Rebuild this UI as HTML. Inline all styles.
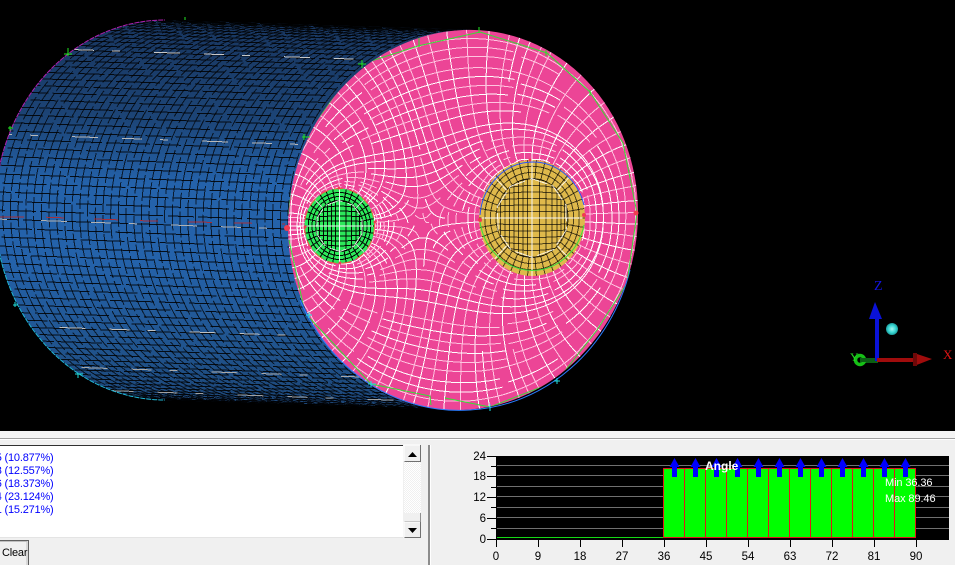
<!DOCTYPE html>
<html><head><meta charset="utf-8"><style>
html,body{margin:0;padding:0;background:#000;width:955px;height:565px;overflow:hidden}
svg{display:block;position:absolute;left:0;top:0}
text{font-family:"Liberation Sans",sans-serif;font-size:11.500px}
</style></head><body>
<svg id="s" width="955" height="565" viewBox="0 0 955 565" xmlns="http://www.w3.org/2000/svg">
<defs>
<linearGradient id="bl" x1="0" y1="20" x2="0" y2="410" gradientUnits="userSpaceOnUse">
<stop offset="0" stop-color="#18355e"/><stop offset=".25" stop-color="#1c4476"/><stop offset=".42" stop-color="#2462aa"/><stop offset=".62" stop-color="#2462aa"/><stop offset=".85" stop-color="#20538c"/><stop offset="1" stop-color="#1c4474"/>
</linearGradient>
<clipPath id="tube"><path d="M165 20 L473 30 L460 410 L165 400 A170 190 0 0 1 165 20Z"/></clipPath>
<clipPath id="disc"><ellipse cx="463" cy="220" rx="175" ry="190" transform="matrix(1 -.04 0 1 0 18.52)"/></clipPath>
<clipPath id="hA"><ellipse cx="339.500" cy="226" rx="35" ry="37.500"/></clipPath>
<clipPath id="hB"><ellipse cx="532" cy="218" rx="53" ry="58"/></clipPath>
<radialGradient id="sph"><stop offset="0" stop-color="#a8f5f0"/><stop offset=".6" stop-color="#38d8d4"/><stop offset="1" stop-color="#1e9c9c"/></radialGradient>
<pattern id="dith" width="2" height="2" patternUnits="userSpaceOnUse"><rect width="2" height="2" fill="#fff"/><rect width="1" height="1" fill="#f0f0f0"/><rect x="1" y="1" width="1" height="1" fill="#f0f0f0"/></pattern>
</defs>

<rect width="955" height="431" fill="#000"/>
<path d="M165 20 L473 30 L460 410 L165 400 A170 190 0 0 1 165 20Z" fill="url(#bl)"/>
<g id="tm" clip-path="url(#tube)"></g>
<path d="M-5 210 A170 190 0 0 1 165 20" fill="none" stroke="#b020b0" stroke-width="1" stroke-dasharray="5 1"/>
<path d="M-5 210 A170 190 0 0 0 165 400" fill="none" stroke="#20b8d8" stroke-width="1" stroke-dasharray="5 1"/>

<ellipse cx="463" cy="220" rx="175" ry="190" transform="matrix(1 -.04 0 1 0 18.52)" fill="#ec4596"/>
<g id="dm" clip-path="url(#disc)"></g>
<path d="M300 300A175 190 0 0 0 470 410A175 190 0 0 0 630 270" fill="none" stroke="#2a7cff" stroke-width="1"/>
<path clip-path="url(#disc)" d="M289 240L305 313L371 384L430 396L431 405M445 398L490 407L557 381L597 330L627 283L637 213L623 143L590 92L547 53L480 32L418 46L362 64L337 92L305 137L292 180L288 215" fill="none" stroke="#35e035" stroke-width="1"/>

<ellipse cx="339.500" cy="226" rx="35" ry="37.500" fill="#2ce95a"/>
<g id="ha" clip-path="url(#hA)"></g>
<ellipse cx="339.500" cy="226" rx="35" ry="37.500" fill="none" stroke="#f05a3c" stroke-width="1" stroke-dasharray="9 6"/>
<ellipse cx="532" cy="218" rx="53" ry="58" fill="#dfb94b"/>
<g id="hb" clip-path="url(#hB)"></g>
<path d="M480 215 A53 58 0 0 1 584 205" fill="none" stroke="#2a50ff" stroke-width="1"/>
<path d="M480 222 A53 58 0 0 0 584 225" fill="none" stroke="#3ce03c" stroke-width="1"/>

<g fill="#f03c50">
<circle cx="287" cy="228" r="3"/><circle cx="636" cy="213" r="2.500"/><circle cx="339" cy="188" r="1.500"/><circle cx="375" cy="222" r="1.500"/><circle cx="340" cy="263" r="1.500"/><circle cx="305" cy="227" r="1.500"/><circle cx="530" cy="160" r="1.500"/><circle cx="584" cy="215" r="2"/><circle cx="480" cy="220" r="2"/>
</g>
<path d="M68 48V56M64 54H72M10 126V131M8 128H13M304 134V140M302 137H310M362 60V68M358 64H366M419 38V47M479 27V33M185 17V20M546 50V56M590 90V96" stroke="#22e622" stroke-width="1"/>
<path d="M15 302V307M13 305H18M78 373V378M75 374H83M371 381V387M368 384H376M490 404V411M557 378V384M554 381H560M309 312V318M306 315H312" stroke="#22e0e0" stroke-width="1"/>

<!-- Triad -->
<rect x="860" y="358" width="18" height="5" fill="#0b5f14"/>
<rect x="875" y="318" width="4" height="43" fill="#0a12d8"/>
<path d="M875 302L869 319H882Z" fill="#0a12d8"/>
<rect x="877" y="358" width="38" height="4" fill="#a00c0c"/>
<path d="M914 353L932 359L914 366Z" fill="#a00c0c"/>
<rect x="913" y="353" width="4" height="13" fill="#6e0808"/>
<circle cx="860" cy="360" r="4.500" fill="none" stroke="#16c016" stroke-width="3.500"/>
<rect x="860" y="358" width="10" height="4" fill="#0b5f14"/>
<circle cx="892" cy="329" r="6" fill="url(#sph)"/>
<text x="874" y="290" fill="#1414e0" style="font-family:'Liberation Serif',serif;font-size:14px">Z</text>
<text x="850" y="361" fill="#22d822" style="font-family:'Liberation Serif',serif;font-size:12px">Y</text>
<text x="943" y="359" fill="#e01414" style="font-family:'Liberation Serif',serif;font-size:13px">X</text>

<!-- Bottom panel -->
<rect y="431" width="955" height="134" fill="#f0f0f0"/>
<rect y="431" width="955" height="7" fill="#f4f4f4"/>
<rect y="438" width="955" height="1" fill="#a0a0a0"/>
<rect y="439" width="955" height="1" fill="#fff"/>
<rect x="0" y="445" width="403" height="93" fill="#fff"/>
<rect x="0" y="445" width="403" height="1" fill="#303030"/>
<rect x="0" y="537" width="403" height="1" fill="#e4e4e4"/>
<g fill="#0000ff" text-anchor="end" style="letter-spacing:-.2px">
<text x="53.500" y="461" style="font-size:11px">5 (10.877%)</text>
<text x="53.500" y="474" style="font-size:11px">3 (12.557%)</text>
<text x="53.500" y="487" style="font-size:11px">6 (18.373%)</text>
<text x="53.500" y="500" style="font-size:11px">4 (23.124%)</text>
<text x="53.500" y="513" style="font-size:11px">1 (15.271%)</text>
</g>
<rect x="404" y="445" width="17" height="93" fill="url(#dith)"/>
<rect x="404" y="445" width="17" height="17" fill="#f0f0f0"/><path d="M404 461V445H420" stroke="#fff" fill="none"/><path d="M404.500 461.500H420.500V445" stroke="#707070" fill="none"/>
<path d="M412.500 452L408 457H417Z" fill="#000"/>
<rect x="404" y="513" width="17" height="9" fill="#f0f0f0"/><path d="M404.500 521.500H420.500V513" stroke="#909090" fill="none"/>
<rect x="404" y="522" width="17" height="16" fill="#f0f0f0"/><path d="M404 537V522H420" stroke="#fff" fill="none"/><path d="M404.500 537.500H420.500V522" stroke="#707070" fill="none"/>
<path d="M408 528H417L412.500 533Z" fill="#000"/>

<rect x="0" y="540" width="29" height="25" fill="#f0f0f0"/>
<path d="M0 540.500H28.500V565" fill="none" stroke="#606060"/>
<path d="M0 541.500H27V565" fill="none" stroke="#a0a0a0" opacity=".6"/>
<text x="2" y="556" fill="#000" style="font-size:11px;letter-spacing:-.2px">Clear</text>

<rect x="428" y="445" width="2" height="120" fill="#8c8c8c"/>
<rect x="430" y="445" width="1" height="120" fill="#fff"/>

<!-- Chart -->
<rect x="496" y="456" width="453" height="83" fill="#000"/>
<g stroke="#707070" stroke-width="1">
<path d="M497 465.500H949M497 475.500H949M497 486.500H949M497 496.500H949M497 507.500H949M497 517.500H949M497 528.500H949"/>
</g>
<rect x="497" y="537" width="166" height="1" fill="#16d816"/>
<rect x="663.500" y="468.500" width="252" height="69" fill="#00ff00" stroke="#e01818"/>
<path d="M684.500 468V538M705.500 468V538M726.500 468V538M747.500 468V538M768.500 468V538M789.500 468V538M810.500 468V538M831.500 468V538M852.500 468V538M873.500 468V538M894.500 468V538" stroke="#e01818" fill="none"/>
<g id="arrows" fill="#0000ff"></g>
<text x="705" y="470" fill="#fff" style="font-weight:bold;font-size:12px">Angle</text>
<text x="885" y="486" fill="#fff" style="font-size:11px;letter-spacing:-.1px">Min 36.36</text>
<text x="885" y="502" fill="#fff" style="font-size:11px;letter-spacing:-.1px">Max 89.46</text>
<g stroke="#000" stroke-width="1" fill="none">
<path d="M496.500 456V547"/>
<path d="M487 456.500H496M487 476.500H496M487 497.500H496M487 518.500H496M487 539.500H949"/>
<path d="M491 466.500H496M491 487.500H496M491 507.500H496M491 528.500H496"/>
<path d="M496.500 539V547M538.500 539V547M580.500 539V547M622.500 539V547M664.500 539V547M706.500 539V547M748.500 539V547M790.500 539V547M832.500 539V547M874.500 539V547M916.500 539V547"/>
</g>
<g fill="#000" text-anchor="end">
<text x="486" y="460">24</text><text x="486" y="480">18</text><text x="486" y="501">12</text><text x="486" y="522">6</text><text x="486" y="543">0</text>
</g>
<g fill="#000" text-anchor="middle">
<text x="496" y="560">0</text><text x="538" y="560">9</text><text x="580" y="560">18</text><text x="622" y="560">27</text><text x="664" y="560">36</text><text x="706" y="560">45</text><text x="748" y="560">54</text><text x="790" y="560">63</text><text x="832" y="560">72</text><text x="874" y="560">81</text><text x="916" y="560">90</text>
</g>
</svg>
<script>
(function(){
var NS="http://www.w3.org/2000/svg";
function pl(g,pts,st,w,op,dash,off){var p=document.createElementNS(NS,"polyline");
 p.setAttribute("points",pts.map(function(a){return a[0].toFixed(1)+","+a[1].toFixed(1)}).join(" "));
 p.setAttribute("fill","none");p.setAttribute("stroke",st);p.setAttribute("stroke-width",w||1);
 if(op)p.setAttribute("opacity",op);
 if(dash){p.setAttribute("stroke-dasharray",dash);if(off)p.setAttribute("stroke-dashoffset",off);}
 p.setAttribute("shape-rendering","crispEdges");g.appendChild(p);}
var PI=Math.PI,cos=Math.cos,sin=Math.sin;
function T(t,th){return [165+298*t+(170+5*t)*cos(th),210+10*t+190*sin(th)];}
var tm=document.getElementById("tm"),i,j,k;
/* rings */
for(i=0;i<=38;i++){var t=i/38,a=[];for(j=0;j<=80;j++){a.push(T(t,PI/2+PI*j/80));}
 pl(tm,a,"#000",1,.72,"26 3 16 3",(i*7)%48);}
/* axial */
for(i=0;i<=66;i++){var th=PI/2+PI*i/66,b=[T(0,th),T(1,th)];
 pl(tm,b,"#000",1,.85,"44 5 26 4",(i*13)%79);}
/* white dashes */
[[PI*1.32,"#c8c8c8"],[PI*1.13,"#b8b8b8"],[PI*.985,"#b0b0b0"],[PI*.79,"#c0c0c0"],[PI*.69,"#a8a8a8"],[PI*.6,"#a0a0a0"]].forEach(function(x,n){
 pl(tm,[T(0,x[0]),T(1,x[0])],x[1],1,1,"20 18 8 34 26 24",n*17);});
pl(tm,[[0,217],[40,217],[150,221],[285,224]],"#c02828",1,.85,"24 22 18 30");

/* disc mesh: harmonic field between holes (u=0) and rim (u=1), drawn as two
   families of evenly spaced streamlines: along the gradient and across it. */
var dm=document.getElementById("dm");
var h=3,X0=282,Y0=24,W=122,H=133,U=[],F=[];
function inside(x,y){var dx=x-463,dy=y-220,uy=.04*dx+dy;return dx*dx/30625+uy*uy/36100<1;}
function inH(x,y,cx,cy,rx,ry){var a=(x-cx)/rx,b=(y-cy)/ry;return a*a+b*b<1;}
for(j=0;j<H;j++){for(i=0;i<W;i++){var x=X0+i*h,y=Y0+j*h,id=j*W+i;
 if(!inside(x,y)){U[id]=1;F[id]=1;}
 else if(inH(x,y,339.5,226,35,37.5)||inH(x,y,532,218,53,58)){U[id]=0;F[id]=1;}
 else{U[id]=.5;F[id]=0;}}}
for(k=0;k<500;k++){for(j=1;j<H-1;j++){for(i=1;i<W-1;i++){var q=j*W+i;if(F[q])continue;
 U[q]+=1.9*(.25*(U[q-1]+U[q+1]+U[q-W]+U[q+W])-U[q]);}}}
function S(x,y){var fx=(x-X0)/h,fy=(y-Y0)/h,ix=Math.floor(fx),iy=Math.floor(fy);
 if(ix<0||iy<0||ix>=W-1||iy>=H-1)return 1;fx-=ix;fy-=iy;var q=iy*W+ix;
 return U[q]*(1-fx)*(1-fy)+U[q+1]*fx*(1-fy)+U[q+W]*(1-fx)*fy+U[q+W+1]*fx*fy;}
function sepAt(x,y){
 var dA=Math.max(0,Math.hypot(x-339.5,y-226)-36),dB=Math.max(0,Math.hypot(x-532,y-218)-56);
 return Math.min(9.5,3+dA*.16,6+dB*.08);
}
function family(perp,seeds,cols){
 var B={},BS=12;
 function far(x,y,f){var sp=sepAt(x,y)*f,cx=Math.floor(x/BS),cy=Math.floor(y/BS);
  for(var a=-1;a<=1;a++)for(var b=-1;b<=1;b++){var c=B[(cx+a)+"_"+(cy+b)];if(!c)continue;
   for(var n=0;n<c.length;n++){var dx=c[n][0]-x,dy=c[n][1]-y;if(dx*dx+dy*dy<sp*sp)return false;}}
  return true;}
 function run(x,y,dir,x0,y0){var out=[];
  for(var s=0;s<520;s++){
   var gx=S(x+3,y)-S(x-3,y),gy=S(x,y+3)-S(x,y-3),g=Math.hypot(gx,gy);
   if(g<1e-7)break;gx/=g;gy/=g;
   var vx=perp?-gy:gx,vy=perp?gx:gy;
   x+=dir*2.5*vx;y+=dir*2.5*vy;
   if(!inside(x,y)&&!perp){out.push([x,y]);break;}
   if(!inside(x,y))break;
   if(S(x,y)<.003){out.push([x,y]);break;}
   if(!far(x,y,.78))break;
   out.push([x,y]);
   if(s>20&&Math.hypot(x-x0,y-y0)<3.5){out.push([x0,y0]);break;}
  }
  return out;}
 var cnt=0;
 seeds.forEach(function(sd){
  if(!inside(sd[0],sd[1])||S(sd[0],sd[1])<.002)return;
  if(!far(sd[0],sd[1],1))return;
  var a=run(sd[0],sd[1],1,sd[0],sd[1]),b=run(sd[0],sd[1],-1,sd[0],sd[1]);
  var line=b.reverse().concat([[sd[0],sd[1]]]).concat(a);
  if(line.length<4)return;
  line.forEach(function(p){var key=Math.floor(p[0]/BS)+"_"+Math.floor(p[1]/BS);(B[key]=B[key]||[]).push(p);});
  pl(dm,line,cols[cnt++%2]);
 });
}
/* spokes: begin on the hole edges, then fill from a scan */
var sp=[],n;
for(n=0;n<34;n++){var e=2*PI*(n+.5)/34;sp.push([339.5+37*cos(e),226+39.5*sin(e)]);}
for(n=0;n<46;n++){var e1=2*PI*(n+.5)/46;sp.push([532+55*cos(e1),218+60*sin(e1)]);}
var grid=[];
for(var gy=30;gy<412;gy+=4)for(var gx=288;gx<640;gx+=4)grid.push([gx,gy]);
family(false,sp.concat(grid),["#ffffff","#ffc4e0"]);
/* rings: start from the rim and work inward */
var rs=[];
[.985,.93].forEach(function(r){for(n=0;n<12;n++){var e2=2*PI*n/12,x2=463+175*r*cos(e2),y2=220+190*r*sin(e2)-.04*175*r*cos(e2);rs.push([x2,y2]);}});
grid.sort(function(a,b){return S(b[0],b[1])-S(a[0],a[1]);});
family(true,rs.concat(grid),["#ffc4e0","#ffffff"]);

/* hole meshes */
function hole(id,cx,cy,rx,ry,nr,ns,line,lop,mer,par){
 var g=document.getElementById(id),ir=.68;
 for(var r=0;r<nr;r++){var u=ir+(1-ir)*r/nr,a=[];
  for(var j=0;j<=56;j++){var e=2*PI*j/56;a.push([cx+rx*u*cos(e),cy+ry*u*sin(e)]);}
  pl(g,a,line,1,lop);}
 for(var i=0;i<ns;i++){var e2=2*PI*i/ns;pl(g,[[cx+rx*ir*cos(e2),cy+ry*ir*sin(e2)],[cx+rx*cos(e2),cy+ry*sin(e2)]],line,1,lop);}
 for(var v=-mer;v<=mer;v++){var w=v/mer,xn=w<0?w:1-Math.pow(1-w,1.7);
  var x=cx+rx*ir*xn,h2=ry*ir*Math.sqrt(Math.max(0,1-xn*xn));
  pl(g,[[x,cy-h2],[x,cy+h2]],line,1,lop);}
 for(var p=-par;p<=par;p++){var yn=p/(par+.5),y=cy+ry*ir*yn,wd=rx*ir*Math.sqrt(1-yn*yn),c=[];
  for(j=0;j<=8;j++){var f=-1+j/4;c.push([cx+wd*f,y+(1-f*f)*yn*ry*.05]);}
  pl(g,c,line,1,lop);}
 pl(g,[[cx-rx*.95,cy],[cx+rx*.95,cy]],"#fff",1,.95);
 pl(g,[[cx,cy-ry],[cx,cy+ry]],"#fff",1,.95);
 var q=[];for(j=0;j<=10;j++){var e3=2*PI*j/10+.3;q.push([cx+rx*ir*cos(e3),cy+ry*ir*sin(e3)]);}
 pl(g,q,"#fff",1,.8,"18 5");
 for(i=0;i<4;i++){var e4=PI/4+PI/2*i;pl(g,[[cx+rx*ir*cos(e4),cy+ry*ir*sin(e4)],[cx+rx*cos(e4),cy+ry*sin(e4)]],"#fff",1,.8);}
}
hole("ha",339.5,226,35,37.5,3,32,"#000",.95,6,5);
hole("hb",532,218,53,58,3,38,"#000",.65,8,6);

/* chart arrows */
var ar=document.getElementById("arrows");
for(k=0;k<12;k++){var ax=674.5+21*k,pa=document.createElementNS(NS,"path");
 pa.setAttribute("d","M"+ax+" 458L"+(ax+5)+" 467H"+(ax+2.5)+"V477H"+(ax-2.5)+"V467H"+(ax-5)+"Z");ar.appendChild(pa);}
})();
</script>
</body></html>
